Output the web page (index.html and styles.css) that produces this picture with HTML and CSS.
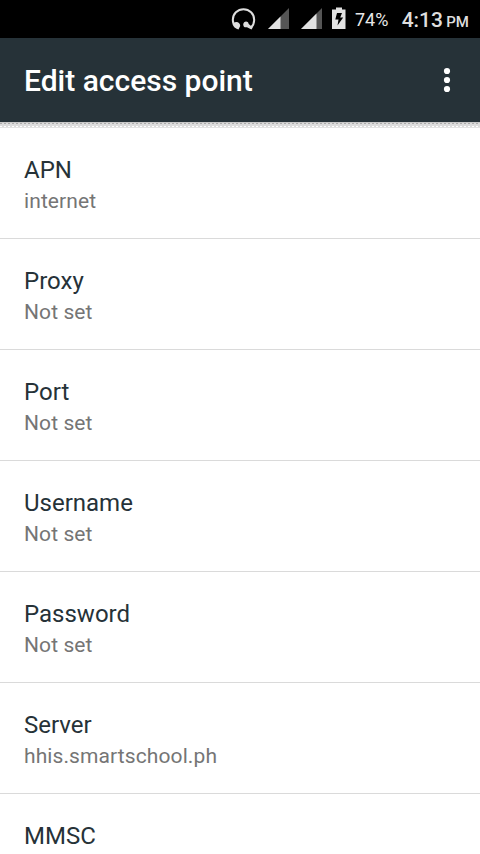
FILE: index.html
```html
<!DOCTYPE html>
<html lang="en">
<head>
<meta charset="utf-8">
<title>Edit access point</title>
<link rel="stylesheet" href="styles.css">
</head>
<body>
<div class="screen">
  <div class="status">
    <svg class="icons" width="120" height="38" viewBox="0 0 120 38" aria-hidden="true">
      <path d="M6 27.500A10.700 10.700 0 1 1 21 27.500" fill="none" stroke="#dedede" stroke-width="2"/>
      <path d="M3.500 23C6.500 20.500 10.500 22.500 10.200 26L8.500 29.500Q4 28.500 3.500 23ZM13.200 24.500C13.500 21 18 20.500 18.700 24L22.800 27.500L21.500 29.500L17 27.200Q13.500 28 13.200 24.500Z" fill="#dedede"/>
      <path d="M59 8V29H38Z M92 8V29H71Z" fill="#555"/>
      <path d="M50.5 16.500V29H38Z M86.500 13.500V29H71Z" fill="#e2e2e2"/>
      <path d="M106 7.500h6v2h3.500v19.500h-13.500V9.500h4Z" fill="#e2e2e2"/>
      <path d="M107 13h5l-1.800 4.500h3l-5.700 8 1-6h-3.200Z" fill="#000"/>
    </svg>
    <span class="battery">74%</span>
    <span class="clock">4:13</span>
    <span class="meridiem">PM</span>
  </div>
  <header class="appbar">
    <h1>Edit access point</h1>
    <svg class="more" width="8" height="26" viewBox="0 0 8 26" fill="#fff" aria-label="More options">
      <circle cx="4" cy="4" r="3.100"/><circle cx="4" cy="13" r="3.100"/><circle cx="4" cy="22" r="3.100"/>
    </svg>
  </header>
  <div class="shadow"></div>
  <main>
    <section class="row"><h2>APN</h2><p>internet</p></section>
    <section class="row"><h2>Proxy</h2><p>Not set</p></section>
    <section class="row"><h2>Port</h2><p>Not set</p></section>
    <section class="row"><h2>Username</h2><p>Not set</p></section>
    <section class="row"><h2>Password</h2><p>Not set</p></section>
    <section class="row"><h2>Server</h2><p>hhis.smartschool.ph</p></section>
    <section class="row"><h2>MMSC</h2></section>
  </main>
</div>
</body>
</html>
```
FILE: styles.css
```css
* { box-sizing: border-box; margin: 0; }
body { background: #fff; font-family: Roboto, sans-serif; }
.screen { height: 854px; overflow: hidden; display: flex; flex-direction: column; }
.status {
  height: 38px; flex: none; background: #000; color: #dedede;
  display: flex; padding: 0 11px 0 230px; white-space: nowrap;
}
.icons { flex: none; }
.battery { font-size: 18px; line-height: 40px; margin-left: 5px; width: 47px; color: #e8e8e8; }
.clock { font-size: 21px; font-weight: 500; line-height: 40px; width: 45px; }
.meridiem { font-size: 15px; font-weight: 500; line-height: 44px; }
.appbar {
  height: 84px; flex: none; background: #263238; color: #fff;
  display: flex; align-items: center; justify-content: space-between; padding: 0 29px 0 24px;
}
h1 { font-size: 30px; font-weight: 500; line-height: 36px; padding-top: 2px; }
.shadow {
  height: 6px; flex: none;
  background:
    repeating-linear-gradient(90deg, #aaa 0 2px, #dcdcdc 2px 4px) 0 1px / 100% 1px no-repeat,
    repeating-linear-gradient(90deg, #fff 0 2px, #dcdcdc 2px 4px) 0 4px / 100% 1px no-repeat,
    linear-gradient(#c8c8c8 0 1px, #dcdcdc 1px 5px, #e4e4e4 5px);
}
.row { height: 111px; padding: 28px 24px 0; border-bottom: 1px solid #dadada; }
h2 { font-size: 24px; font-weight: 400; line-height: 28px; color: #263238; }
p { font-size: 21px; line-height: 25px; margin-top: 5px; color: #757575; letter-spacing: 0.1px; }
```
